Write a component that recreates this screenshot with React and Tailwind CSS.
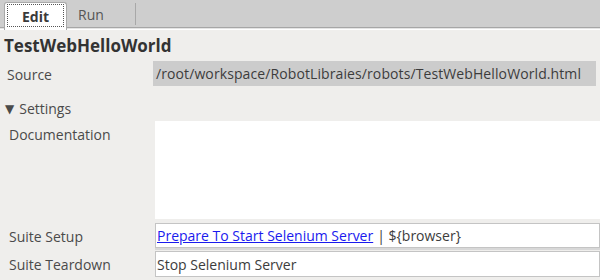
import React from "react";

const font = { fontFamily: "'Open Sans', 'DejaVu Sans', sans-serif" };

const Row = ({ label, children, className = "", pl = "pl-[9px]" }) => (
  <div className={"flex items-start " + className}>
    <div className={"w-[155px] shrink-0 pt-[3px] text-[14px] text-[#4a4a4a] " + pl}>{label}</div>
    {children}
  </div>
);

export default function App() {
  return (
    <div className="w-[600px] h-[280px] overflow-hidden bg-[#efeeec] text-[#3c3c3c]" style={font}>
      {/* tab bar */}
      <div className="relative flex h-[30px] flex-col">
        <div className="flex h-[27px] items-end bg-[#cecece] pl-[4px]">
          <div className="relative z-10 mb-[-3px] flex h-[28px] w-[63px] items-center justify-center rounded-t-[3px] border border-b-0 border-[#a9a9a9] bg-white">
            <div className="absolute inset-x-[2px] top-[1px] bottom-[3px] border border-dotted border-[#555]" />
            <span className="text-[14px] font-bold text-[#3a3a3a]">Edit</span>
          </div>
          <div className="flex h-[25px] w-[68px] items-center pl-[11px] text-[14px] text-[#555]">Run</div>
          <div className="mb-[2px] h-[22px] w-px bg-[#a8a8a8]" />
        </div>
        <div className="h-px bg-[#a6a6a6]" />
        <div className="h-px bg-[#e4e4e4]" />
        <div className="h-px bg-white" />
      </div>

      <div className="pl-[4px] pt-[5px] text-[17px] font-bold leading-[22px] text-[#333]">TestWebHelloWorld</div>

      <Row label="Source" className="mt-[4px]" pl="pl-[7px]">
        <div className="mr-[4px] ml-[-2px] flex h-[25px] flex-1 items-center bg-[#cccccc] pl-[3px] text-[14px] tracking-[0.1px] text-[#3c3c3c]">
          /root/workspace/RobotLibraies/robots/TestWebHelloWorld.html
        </div>
      </Row>

      <div className="mt-[14px] flex items-center pl-[5px] text-[14px] leading-[18px] text-[#4a4a4a]">
        <span className="mr-[5px] text-[12px] leading-[12px]">▼</span>Settings
      </div>

      <Row label="Documentation" className="mt-[3px]">
        <div className="h-[98px] flex-1 bg-white" />
      </Row>

      <Row label="Suite Setup" className="mt-[4px]">
        <div className="flex h-[25px] flex-1 items-center border border-[#c4c4c4] bg-white pl-[1px] text-[14px] shadow-[0_2px_0_#d8d8d8]">
          <span className="text-[#1a1aee] underline">Prepare To Start Selenium Server</span>
          <span className="ml-[4px] text-[#3c3c3c]">| ${"{browser}"}</span>
        </div>
      </Row>

      <Row label="Suite Teardown" className="mt-[3px]">
        <div className="flex h-[26px] flex-1 items-center border border-[#c4c4c4] bg-white pl-[1px] text-[14px] text-[#3c3c3c]">
          Stop Selenium Server
        </div>
      </Row>
    </div>
  );
}
